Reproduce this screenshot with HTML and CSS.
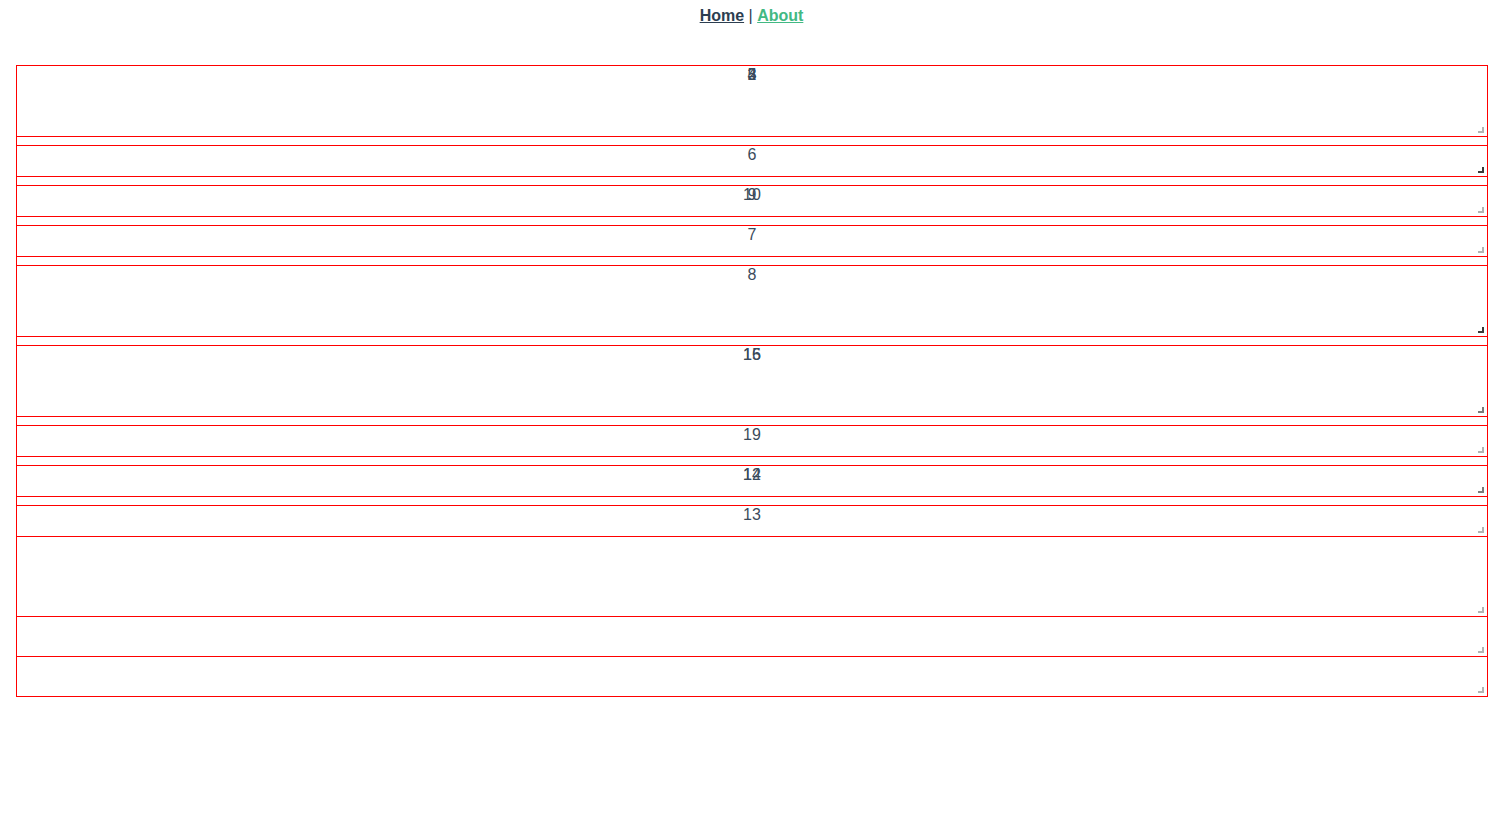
FILE: index.html
```html
<!DOCTYPE html>
<html lang="en">
<head>
    <meta charset="UTF-8">
    <meta name="viewport" content="width=device-width, initial-scale=1.0">
    <title>grid</title>
    <link rel="stylesheet" href="styles.css">
</head>
<body>

    <div id="app">
        <div class="nav">
            <a href="#/" class="nav-link">Home</a> |
            <a href="#/about" class="nav-link active">About</a>
        </div>

        <!-- Griglia degli elementi -->
        <div class="grid">
            <div class="grid-item tall">
                <span class="item-label">2</span>
                <span class="item-label">3</span>
                <span class="item-label">4</span>
                <span class="item-label">5</span>
                <span class="resize-handle"></span>
            </div>
            <div class="grid-item">
                <span class="item-label">6</span>
                <span class="resize-handle dark"></span>
            </div>
            <div class="grid-item">
                <span class="item-label">9</span>
                <span class="item-label">10</span>
                <span class="resize-handle"></span>
            </div>
            <div class="grid-item">
                <span class="item-label">7</span>
                <span class="resize-handle"></span>
            </div>
            <div class="grid-item tall">
                <span class="item-label">8</span>
                <span class="resize-handle dark"></span>
            </div>
            <div class="grid-item tall">
                <span class="item-label">15</span>
                <span class="item-label">16</span>
                <span class="resize-handle mid"></span>
            </div>
            <div class="grid-item">
                <span class="item-label">19</span>
                <span class="resize-handle"></span>
            </div>
            <div class="grid-item">
                <span class="item-label">12</span>
                <span class="item-label">14</span>
                <span class="resize-handle mid"></span>
            </div>
            <div class="grid-item flush">
                <span class="item-label">13</span>
                <span class="resize-handle"></span>
            </div>
            <div class="grid-item stacked big">
                <span class="resize-handle"></span>
            </div>
            <div class="grid-item stacked">
                <span class="resize-handle"></span>
            </div>
            <div class="grid-item stacked">
                <span class="resize-handle"></span>
            </div>
        </div>
    </div>

</body>
</html>
```

FILE: styles.css
```css
body {
    margin: 0;
    padding: 0;
    background-color: #ffffff;
}
#app {
    font-family: Avenir, Helvetica, 'Liberation Sans', Arial, sans-serif;
    -webkit-font-smoothing: antialiased;
    text-align: center;
    color: #2c3e50;
}
.nav {
    padding: 7px 0 0;
    font-size: 16px;
    line-height: 18px;
}
.nav-link {
    font-weight: bold;
    color: #2c3e50;
}
.nav-link.active {
    color: #42b983;
}
.grid {
    margin: 40px 15px 0 16px;
    border-left: 1px solid red;
    border-right: 1px solid red;
}
.grid-item {
    display: grid;
    height: 30px;
    margin-bottom: 8px;
    border-top: 1px solid red;
    border-bottom: 1px solid red;
}
.grid-item.tall {
    height: 70px;
}
.grid-item.flush {
    margin-bottom: 0;
}
.grid-item.stacked {
    height: 39px;
    margin: 0;
    border-top: none;
}
.grid-item.stacked.big {
    height: 79px;
}
.item-label {
    grid-area: 1 / 1;
    justify-self: center;
    align-self: start;
    font-size: 16px;
    line-height: 18px;
    color: #3a4b5c;
}
.resize-handle {
    grid-area: 1 / 1;
    justify-self: end;
    align-self: end;
    width: 6px;
    height: 6px;
    margin: 0 3px 3px 0;
    background:
        linear-gradient(#b3b3b3, #b3b3b3) right top / 2px 6px no-repeat,
        linear-gradient(#b3b3b3, #b3b3b3) left bottom / 6px 2px no-repeat;
}
.resize-handle.mid {
    background:
        linear-gradient(#7a7a7a, #7a7a7a) right top / 2px 6px no-repeat,
        linear-gradient(#7a7a7a, #7a7a7a) left bottom / 6px 2px no-repeat;
}
.resize-handle.dark {
    background:
        linear-gradient(#3a3a3a, #3a3a3a) right top / 2px 6px no-repeat,
        linear-gradient(#3a3a3a, #3a3a3a) left bottom / 6px 2px no-repeat;
}
```
